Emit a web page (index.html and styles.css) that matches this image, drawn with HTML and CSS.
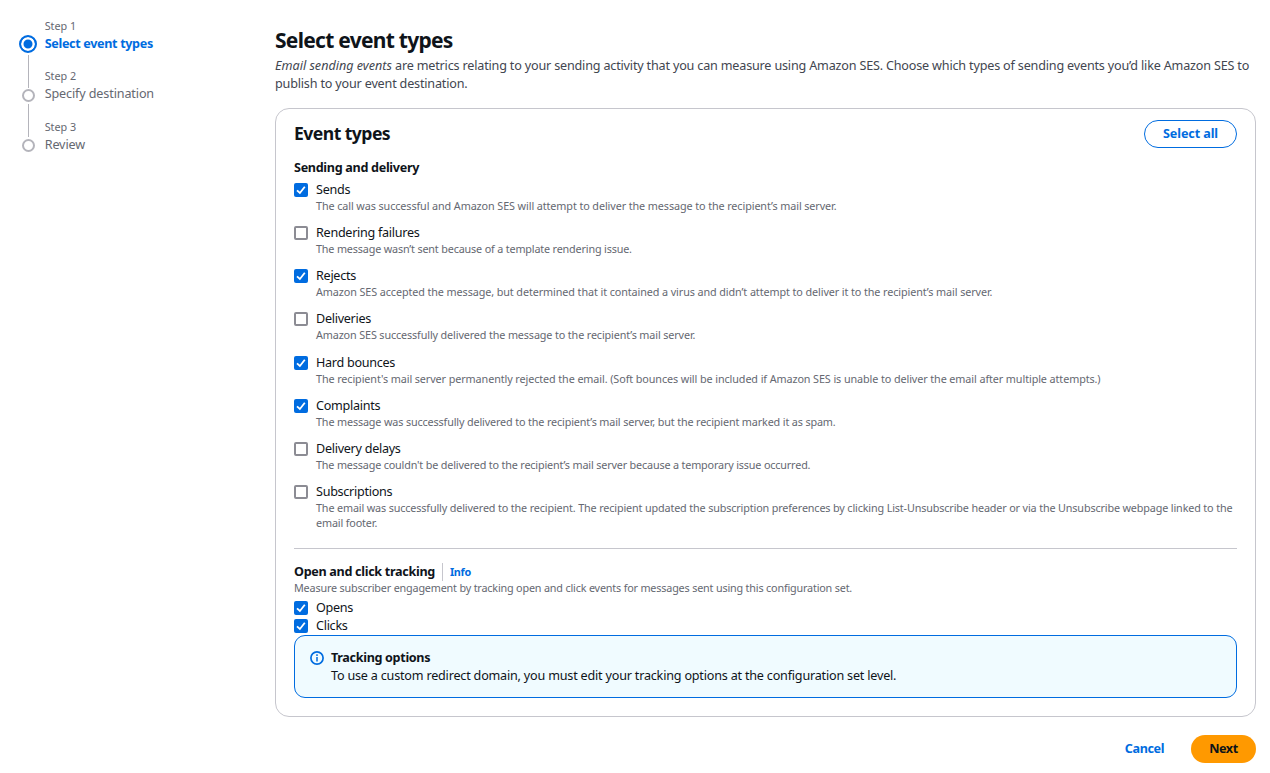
FILE: index.html
```
<!DOCTYPE html>
<html lang="en"><head><meta charset="utf-8"><title>Select event types</title><link rel="stylesheet" href="styles.css"></head>
<body>
<div class="layout">
<nav class="steps">
<div class="step active"><div class="rail"><span class="dot"></span><span class="line"></span></div><div><small class="num">Step 1</small><span class="name">Select event types</span></div></div>
<div class="step"><div class="rail"><span class="dot"></span><span class="line"></span></div><div><small class="num">Step 2</small><span class="name">Specify destination</span></div></div>
<div class="step"><div class="rail"><span class="dot"></span></div><div><small class="num">Step 3</small><span class="name">Review</span></div></div>
</nav>
<main class="main">
<h1 class="title">Select event types</h1>
<p class="intro"><em class="term">Email sending events</em> are metrics relating to your sending activity that you can measure using Amazon SES. Choose which types of sending events you’d like Amazon SES to<br>publish to your event destination.</p>
<section class="card">
<header class="card-head"><h2 class="card-title">Event types</h2><button class="btn outline">Select all</button></header>
<h3 class="group">Sending and delivery</h3>
<div class="options" id="options"></div>
<hr class="rule">
<div class="tracking"><h3 class="group">Open and click tracking</h3><a class="info">Info</a></div>
<p class="desc summary">Measure subscriber engagement by tracking open and click events for messages sent using this configuration set.</p>
<div class="options compact" id="tracking"></div>
<div class="alert"><svg class="alert-icon" viewBox="0 0 14 14"><circle cx="7" cy="7" r="6.1"/><path class="stem" d="M7 6v4.6M7 3.3v1.6"/></svg><div><strong class="alert-title">Tracking options</strong><p class="alert-text">To use a custom redirect domain, you must edit your tracking options at the configuration set level.</p></div></div>
</section>
<footer class="actions"><button class="btn link">Cancel</button><button class="btn primary">Next</button></footer>
</main></div>
<script src="app.js"></script>
</body></html>
```
FILE: app.js
```
const events = [
  ["Sends", true, "The call was successful and Amazon SES will attempt to deliver the message to the recipient’s mail server."],
  ["Rendering failures", false, "The message wasn’t sent because of a template rendering issue."],
  ["Rejects", true, "Amazon SES accepted the message, but determined that it contained a virus and didn’t attempt to deliver it to the recipient’s mail server."],
  ["Deliveries", false, "Amazon SES successfully delivered the message to the recipient’s mail server."],
  ["Hard bounces", true, "The recipient's mail server permanently rejected the email. (Soft bounces will be included if Amazon SES is unable to deliver the email after multiple attempts.)"],
  ["Complaints", true, "The message was successfully delivered to the recipient’s mail server, but the recipient marked it as spam."],
  ["Delivery delays", false, "The message couldn't be delivered to the recipient’s mail server because a temporary issue occurred."],
  ["Subscriptions", false, "The email was successfully delivered to the recipient. The recipient updated the subscription preferences by clicking List-Unsubscribe header or via the Unsubscribe webpage linked to the email footer."]
];
const option = ([name, on, text]) => `<label class="option"><span class="box ${on ? "on" : ""}">${on ? '<svg class="tick" viewBox="0 0 14 14"><path d="M3 7.3 5.9 10 10.8 3.7"/></svg>' : ""}</span><span><span class="label">${name}</span>${text ? `<span class="desc">${text}</span>` : ""}</span></label>`;
document.getElementById("options").innerHTML = events.map(option).join("");
document.getElementById("tracking").innerHTML = [["Opens", true], ["Clicks", true]].map(option).join("");
```
FILE: styles.css
```
* { box-sizing: border-box; }
body { margin: 0; background: #fff; color: #0f141a; font: 12.6px/18px "Noto Sans", "Open Sans", sans-serif; overflow: hidden; }
h1, h2, h3, p { margin: 0; }
.layout { display: grid; grid-template-columns: 256px 981px; padding: 17px 0 0 19px; }
.step { display: flex; gap: 7.7px; height: 50.3px; color: #656871; }
.rail { width: 18px; display: flex; flex-direction: column; align-items: center; padding-top: 22px; }
.step:last-child .rail { padding-top: 21.4px; }
.dot { width: 13px; height: 13px; border: 2px solid #b4b4bb; border-radius: 50%; flex: none; }
.active .rail { padding-top: 18px; }
.active .dot { width: 18px; height: 18px; border-color: #006ce0; background: #006ce0; box-shadow: inset 0 0 0 2.5px #fff; }
.line { width: 1px; height: 33px; background: #b4b4bb; margin: 2px 0; flex: none; }
.num { display: block; font-size: 10.8px; line-height: 18px; }
.name { display: block; letter-spacing: -.13px; }
.active .name { color: #006ce0; font-weight: 700; letter-spacing: -.34px; }
.title { font-size: 21px; line-height: 27px; font-weight: 700; margin-top: 10px; letter-spacing: -.72px; }
.intro { color: #424650; margin-top: 3px; white-space: nowrap; letter-spacing: -.18px; }
.term { letter-spacing: 0; }
.card { margin-top: 15px; height: 609px; border: 1px solid #c6c6cd; border-radius: 14px; padding: 11px 18px 0; }
.card-head { display: flex; justify-content: space-between; align-items: center; height: 28px; }
.card-title { font-size: 17.6px; line-height: 22px; letter-spacing: -.55px; margin-top: -2px; }
.btn { font: 700 12.6px/18px "Noto Sans", sans-serif; height: 28px; border-radius: 18px; border: 0; padding: 0; }
.outline { width: 93px; border: 1px solid #006ce0; color: #006ce0; background: #fff; letter-spacing: -.1px; }
.group { font-size: 12.6px; line-height: 18px; letter-spacing: -.31px; }
.card-head + .group { margin-top: 11px; }
.options { display: flex; flex-direction: column; gap: 10.15px; margin-top: 4px; }
.option { display: flex; gap: 8px; }
.box { flex: none; width: 14px; height: 14px; margin-top: 2px; border: 2px solid #8c8c94; border-radius: 2px; }
.box.on { border: 0; background: #006ce0; }
.tick { display: block; fill: none; stroke: #fff; stroke-width: 1.8; }
.label { display: block; letter-spacing: -.28px; }
.desc { display: block; color: #656871; font-size: 10.8px; line-height: 15px; letter-spacing: -.13px; margin-top: -1px; }
.option .desc { margin-bottom: 1px; }
.option:nth-child(1) .desc, .option:nth-child(3) .desc, .option:nth-child(5) .desc { letter-spacing: -.095px; }
.option:nth-child(2) .desc, .option:nth-child(7) .desc { letter-spacing: -.165px; }
.option:nth-child(6) .desc, .option:nth-child(8) .desc { letter-spacing: -.143px; }
.summary { letter-spacing: -.177px; }
.compact { gap: 0; }
.rule { border: 0; border-top: 1px solid #c6c6cd; margin: 17px 0 14px; }
.tracking { display: flex; }
.info { font-size: 10.8px; line-height: 18px; font-weight: 700; color: #006ce0; border-left: 1px solid #c6c6cd; margin-left: 7px; padding-left: 7px; letter-spacing: -.3px; }
.alert { display: flex; gap: 7px; height: 63px; border: 1px solid #006ce0; border-radius: 11px; background: #f0fbff; padding: 13px 15px; }
.alert-icon { width: 14px; height: 14px; margin-top: 2px; fill: none; stroke: #006ce0; stroke-width: 1.7; flex: none; }
.stem { stroke-width: 1.5; }
.alert-title { display: block; letter-spacing: -.33px; }
.alert-text { letter-spacing: -.2px; }
.actions { display: flex; justify-content: flex-end; gap: 27px; margin-top: 18px; }
.link { color: #006ce0; background: none; letter-spacing: -.4px; }
.primary { width: 65px; background: #ff9900; color: #0f141a; letter-spacing: -.5px; }
```
